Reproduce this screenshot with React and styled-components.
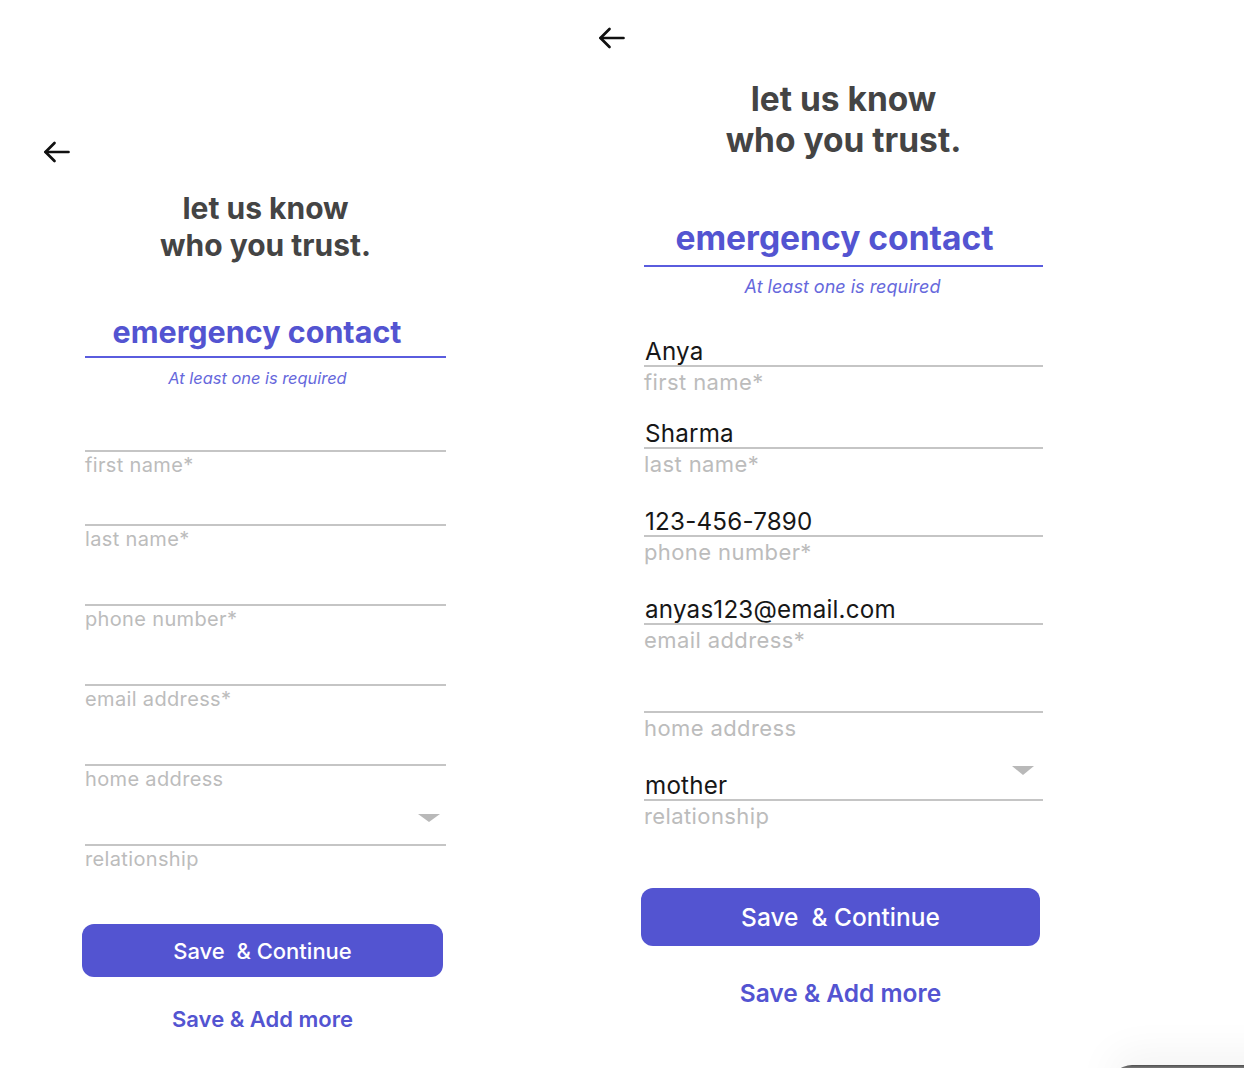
import React from 'react';
import styled, { createGlobalStyle, ThemeProvider } from 'styled-components';

const Global = createGlobalStyle`
  html, body { margin: 0; padding: 0; background: #ffffff; }
  body { font-family: Inter, "Noto Sans", sans-serif; -webkit-font-smoothing: antialiased; }
  * { box-sizing: border-box; }
`;

const compact = {
  screenX: 43, screenTop: 141, formML: 42, formW: 361,
  titleMt: 27, titleSize: 30, titleLH: 37,
  headingMt: 50, headingSize: 30.5, headingLH: 36, headingPb: 6, headingShift: 17,
  reqMt: 10, reqSize: 16.4, reqLH: 20, reqShift: 16,
  fieldsMt: 36, valueRow: 26, valueSize: 22, labelSize: 20, labelLH: 26, track: 0.35,
  fieldGap: 26, firstGap: 20,
  caretTop: -4, caretRight: 6, caretW: 11, caretH: 8,
  btnMt: 52, btnH: 53, btnSize: 22,
  linkMt: 29, linkSize: 22, linkLH: 26,
};

const roomy = {
  screenX: 152, screenTop: 27, formML: 46, formW: 399,
  titleMt: 30, titleSize: 33.5, titleLH: 41,
  headingMt: 57, headingSize: 33.6, headingLH: 40, headingPb: 7, headingShift: 18,
  reqMt: 9, reqSize: 18, reqLH: 22, reqShift: 2,
  fieldsMt: 39, valueRow: 28, valueSize: 24.2, labelSize: 22, labelLH: 30, track: 0.4,
  fieldGap: 28, firstGap: 22,
  caretTop: -5, caretRight: 9, caretW: 11, caretH: 9,
  btnMt: 57, btnH: 58, btnSize: 24.5,
  linkMt: 33, linkSize: 24.5, linkLH: 28,
};

const Page = styled.main`
  position: relative;
  display: flex;
  align-items: flex-start;
  width: 1244px;
  height: 1068px;
  overflow: hidden;
`;

const Screen = styled.section`
  display: flex;
  flex-direction: column;
  align-items: flex-start;
  margin-left: ${p => p.theme.screenX}px;
  padding-top: ${p => p.theme.screenTop}px;
`;

const Back = styled.button`
  border: 0;
  background: none;
  padding: 0;
  width: 27px;
  height: 22px;
  display: flex;
  color: #111;
  cursor: pointer;
`;

const Form = styled.div`
  margin-left: ${p => p.theme.formML}px;
  width: ${p => p.theme.formW}px;
  display: flex;
  flex-direction: column;
`;

const Title = styled.h1`
  margin: ${p => p.theme.titleMt}px 0 0;
  font-size: ${p => p.theme.titleSize}px;
  line-height: ${p => p.theme.titleLH}px;
  font-weight: 700;
  color: #444444;
  text-align: center;
`;

const Heading = styled.h2`
  margin: ${p => p.theme.headingMt}px 0 0;
  font-size: ${p => p.theme.headingSize}px;
  line-height: ${p => p.theme.headingLH}px;
  font-weight: 700;
  color: #5354d1;
  text-align: center;
  padding: 0 ${p => p.theme.headingShift}px ${p => p.theme.headingPb}px 0;
  border-bottom: 2px solid #5a5cde;
`;

const Required = styled.p`
  margin: ${p => p.theme.reqMt}px 0 0;
  padding-right: ${p => p.theme.reqShift}px;
  font-size: ${p => p.theme.reqSize}px;
  line-height: ${p => p.theme.reqLH}px;
  font-style: italic;
  font-weight: 400;
  color: #6668dc;
  text-align: center;
`;

const Fields = styled.div`
  display: flex;
  flex-direction: column;
  gap: ${p => p.theme.fieldGap}px;
  margin-top: ${p => p.theme.fieldsMt}px;
  & > :first-child {
    margin-bottom: ${p => p.theme.firstGap - p.theme.fieldGap}px;
  }
`;

const Field = styled.div`
  position: relative;
  display: flex;
  flex-direction: column;
`;

const Value = styled.div`
  height: ${p => p.theme.valueRow + 2}px;
  font-size: ${p => p.theme.valueSize}px;
  line-height: ${p => p.theme.valueRow + 2}px;
  letter-spacing: 0.2px;
  color: #171717;
  border-bottom: 2px solid #c5c5c5;
  padding-left: 1px;
`;

const Label = styled.div`
  font-size: ${p => p.theme.labelSize}px;
  line-height: ${p => p.theme.labelLH}px;
  letter-spacing: ${p => p.theme.track}px;
  color: #bcbcbc;
`;

const Caret = styled.span`
  position: absolute;
  top: ${p => p.theme.caretTop}px;
  right: ${p => p.theme.caretRight}px;
  width: 0;
  height: 0;
  border-left: ${p => p.theme.caretW}px solid transparent;
  border-right: ${p => p.theme.caretW}px solid transparent;
  border-top: ${p => p.theme.caretH}px solid #b9b9b9;
`;

const Primary = styled.button`
  margin: ${p => p.theme.btnMt}px 0 0 -3px;
  width: ${p => p.theme.formW}px;
  height: ${p => p.theme.btnH}px;
  border: 0;
  border-radius: 12px;
  background: #5354d1;
  color: #ffffff;
  font-family: Inter, sans-serif;
  font-size: ${p => p.theme.btnSize}px;
  font-weight: 500;
  white-space: pre;
  cursor: pointer;
`;

const LinkButton = styled.button`
  margin: ${p => p.theme.linkMt}px 0 0 -3px;
  width: ${p => p.theme.formW}px;
  border: 0;
  padding: 0;
  background: none;
  color: #5354d1;
  font-family: Inter, sans-serif;
  font-size: ${p => p.theme.linkSize}px;
  line-height: ${p => p.theme.linkLH}px;
  font-weight: 600;
  text-align: center;
  cursor: pointer;
`;

const DockEdge = styled.div`
  position: absolute;
  left: 1110px;
  top: 1065px;
  width: 220px;
  height: 40px;
  border-radius: 22px 0 0 0;
  background: linear-gradient(#4f4f4f, #8a8a8a 4px);
  box-shadow: 0 -12px 40px rgba(0, 0, 0, 0.05);
`;

const ArrowIcon = () => (
  <svg width="27" height="22" viewBox="0 0 27 22" fill="none" stroke="currentColor"
    strokeWidth="2.7" strokeLinecap="round" strokeLinejoin="round">
    <path d="M25.5 11H2.5" />
    <path d="M11.5 2L2.5 11l9 9" />
  </svg>
);

const fieldsEmpty = [
  { label: 'first name*' },
  { label: 'last name*' },
  { label: 'phone number*' },
  { label: 'email address*' },
  { label: 'home address' },
  { label: 'relationship', select: true },
];

const fieldsFilled = [
  { label: 'first name*', value: 'Anya' },
  { label: 'last name*', value: 'Sharma' },
  { label: 'phone number*', value: '123-456-7890' },
  { label: 'email address*', value: 'anyas123@email.com' },
  { label: 'home address' },
  { label: 'relationship', value: 'mother', select: true },
];

const ContactScreen = ({ theme, fields }) => (
  <ThemeProvider theme={theme}>
    <Screen>
      <Back aria-label="back"><ArrowIcon /></Back>
      <Form>
        <Title>let us know<br />who you trust.</Title>
        <Heading>emergency contact</Heading>
        <Required>At least one is required</Required>
        <Fields>
          {fields.map(f => (
            <Field key={f.label}>
              {f.select && <Caret />}
              <Value>{f.value || ''}</Value>
              <Label>{f.label}</Label>
            </Field>
          ))}
        </Fields>
        <Primary>{'Save  & Continue'}</Primary>
        <LinkButton>Save &amp; Add more</LinkButton>
      </Form>
    </Screen>
  </ThemeProvider>
);

export default function App() {
  return (
    <>
      <Global />
      <Page>
        <ContactScreen theme={compact} fields={fieldsEmpty} />
        <ContactScreen theme={roomy} fields={fieldsFilled} />
        <DockEdge />
      </Page>
    </>
  );
}
